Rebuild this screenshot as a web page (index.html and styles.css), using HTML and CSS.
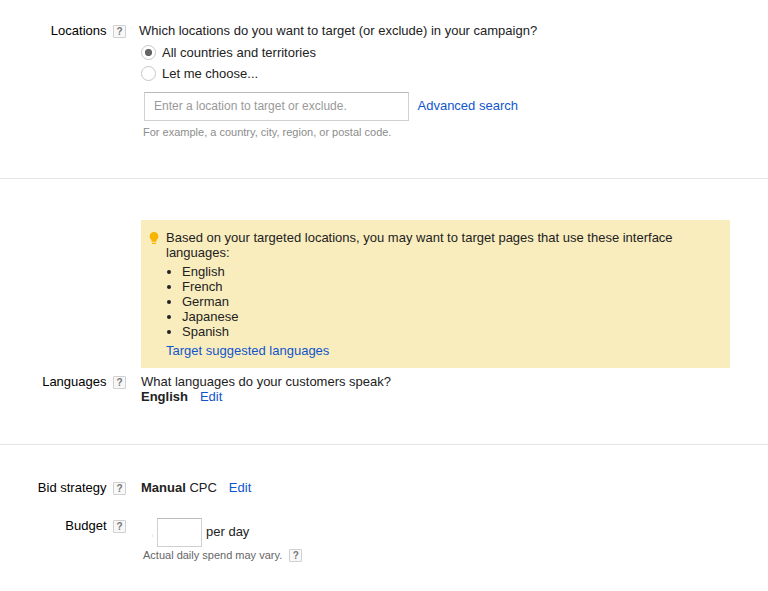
FILE: index.html
```
<!DOCTYPE html>
<html lang="en">
<head>
<meta charset="utf-8">
<title>Campaign settings</title>
<link rel="stylesheet" href="styles.css">
</head>
<body>
<main>
  <section class="row locations">
    <div class="label">Locations <span class="help">?</span></div>
    <div class="content">
      <p class="question">Which locations do you want to target (or exclude) in your campaign?</p>
      <label class="choice"><input type="radio" name="location" checked><span>All countries and territories</span></label>
      <label class="choice"><input type="radio" name="location"><span>Let me choose...</span></label>
      <div class="search">
        <input class="field" type="text" placeholder="Enter a location to target or exclude.">
        <a href="#">Advanced search</a>
      </div>
      <p class="hint light">For example, a country, city, region, or postal code.</p>
    </div>
  </section>

  <section class="languages">
    <aside class="tip">
      <svg class="bulb" viewBox="0 0 10 13" width="10" height="13"><path fill="#f8b500" d="M5 0a4.4 4.4 0 0 0-4.4 4.4c0 1.5.8 2.7 1.9 3.5v1.9h5V7.9c1.1-.8 1.9-2 1.9-3.5A4.4 4.4 0 0 0 5 0zM3 10.8h4V12H3z"/></svg>
      <div>
        <p>Based on your targeted locations, you may want to target pages that use these interface languages:</p>
        <ul>
          <li>English</li>
          <li>French</li>
          <li>German</li>
          <li>Japanese</li>
          <li>Spanish</li>
        </ul>
        <a href="#">Target suggested languages</a>
      </div>
    </aside>
    <div class="row">
      <div class="label">Languages <span class="help">?</span></div>
      <div class="content">
        <p>What languages do your customers speak?</p>
        <p class="value"><b>English</b><a href="#">Edit</a></p>
      </div>
    </div>
  </section>

  <section class="bidding">
    <div class="row">
      <div class="label">Bid strategy <span class="help">?</span></div>
      <p class="content value"><span><b>Manual</b> CPC</span><a href="#">Edit</a></p>
    </div>
    <div class="row budget">
      <div class="label">Budget <span class="help">?</span></div>
      <div class="content">
        <div class="amount"><i class="currency"></i><input class="field" type="text" aria-label="Daily budget"><span>per day</span></div>
        <p class="hint">Actual daily spend may vary. <span class="help">?</span></p>
      </div>
    </div>
  </section>
</main>
</body>
</html>
```
FILE: styles.css
```
* { box-sizing: border-box; }
body {
  margin: 0;
  background: #fff;
  color: #222;
  font: 13px/15px "Liberation Sans", Arial, sans-serif;
}
p, ul { margin: 0; padding: 0; }
a { color: #15c; text-decoration: none; }

.row { display: grid; grid-template-columns: 126px 1fr; column-gap: 15px; }
.label {
  display: flex;
  justify-content: flex-end;
  align-items: flex-start;
  gap: 6.5px;
  color: #000;
}
.help {
  flex: none;
  width: 13px;
  height: 13px;
  margin-top: 2px;
  border: 1px solid #d0d0d0;
  border-radius: 1px;
  background: #f8f8f8;
  color: #777;
  font: bold 10px/12px "Liberation Sans", Arial, sans-serif;
  text-align: center;
}

.locations { height: 179px; padding-top: 23px; border-bottom: 1px solid #e5e5e5; column-gap: 13px; }
.question { margin-bottom: 7px; }
.choice { display: flex; align-items: center; gap: 6px; height: 15px; margin: 0 0 6px 2px; }
.choice input {
  appearance: none;
  width: 15px;
  height: 15px;
  margin: 0;
  border: 1px solid #c6c6c6;
  border-radius: 50%;
}
.choice input:checked { background: radial-gradient(circle, #666 3.3px, transparent 4px); }
.search { display: flex; align-items: center; gap: 8.5px; margin: 11px 0 0 5px; }
.field {
  width: 265px;
  height: 29px;
  margin: 0;
  padding: 0 9px 2px;
  border: 1px solid #d0d0d0;
  border-top-color: #bbb;
  border-radius: 0;
  background: #fff;
  font: 12px/15px "Liberation Sans", Arial, sans-serif;
}
.field::placeholder { color: #999; opacity: 1; }
.search a { margin-top: -2px; }
.hint { margin-left: 2px; color: #666; font-size: 11px; }
.light { margin: 4px 0 0 4px; color: #8c8c8c; }

.languages { height: 266px; padding-top: 41px; border-bottom: 1px solid #e5e5e5; }
.tip {
  display: flex;
  gap: 7px;
  width: 589px;
  height: 148px;
  margin: 0 0 6px 141px;
  padding: 10px 50px 0 8px;
  background: #f9edbe;
}
.bulb { flex: none; margin-top: 2px; }
.tip ul { margin: 4px 0; padding-left: 16px; }
.value { display: flex; gap: 12px; }

.bidding { padding-top: 35px; }
.budget { margin-top: 23px; }
.amount { display: flex; align-items: center; gap: 4px; height: 29px; }
.currency { width: 1px; height: 3px; margin: 5px 0 0 11px; background: #d9eef5; }
.amount .field { width: 45px; }
.amount span { margin-top: -2px; }
.budget .hint { display: flex; gap: 7px; margin-top: 1px; }
.hint .help { margin-top: 1px; }
```
